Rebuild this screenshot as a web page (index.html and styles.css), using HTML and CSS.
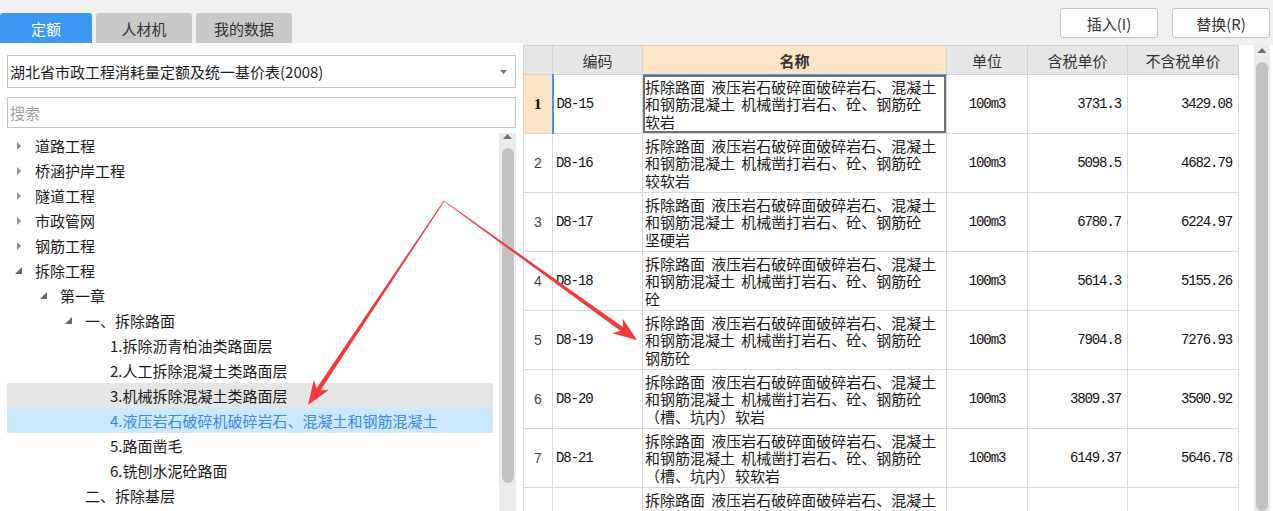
FILE: index.html
```html
<!DOCTYPE html>
<html lang="zh-CN">
<head>
<meta charset="utf-8">
<title>定额</title>
<link rel="stylesheet" href="styles.css">
</head>
<body>
<div class="app">
  <header class="topbar">
    <nav class="tabs">
      <div class="tab active">定额</div>
      <div class="tab">人材机</div>
      <div class="tab">我的数据</div>
    </nav>
    <div class="actions">
      <button class="btn">插入(I)</button>
      <button class="btn">替换(R)</button>
    </div>
  </header>
  <main class="main">
    <aside class="left">
      <div class="select">
        <span>湖北省市政工程消耗量定额及统一基价表(2008)</span>
        <svg class="caret" width="7" height="4" viewBox="0 0 7 4"><polygon points="0,0 7,0 3.5,4" fill="#777"/></svg>
      </div>
      <div class="search">搜索</div>
      <div class="tree-wrap">
        <ul class="tree">
          <li class="l0"><span class="tog"><svg width="22" height="25" viewBox="0 0 22 25"><polygon points="4,9 4,17 8,13" fill="#8c8c8c"/></svg></span>道路工程</li>
          <li class="l0"><span class="tog"><svg width="22" height="25" viewBox="0 0 22 25"><polygon points="4,9 4,17 8,13" fill="#8c8c8c"/></svg></span>桥涵护岸工程</li>
          <li class="l0"><span class="tog"><svg width="22" height="25" viewBox="0 0 22 25"><polygon points="4,9 4,17 8,13" fill="#8c8c8c"/></svg></span>隧道工程</li>
          <li class="l0"><span class="tog"><svg width="22" height="25" viewBox="0 0 22 25"><polygon points="4,9 4,17 8,13" fill="#8c8c8c"/></svg></span>市政管网</li>
          <li class="l0"><span class="tog"><svg width="22" height="25" viewBox="0 0 22 25"><polygon points="4,9 4,17 8,13" fill="#8c8c8c"/></svg></span>钢筋工程</li>
          <li class="l0"><span class="tog"><svg width="22" height="25" viewBox="0 0 22 25"><polygon points="9,9 9,16 2,16" fill="#666"/></svg></span>拆除工程</li>
          <li class="l1"><span class="tog"><svg width="22" height="25" viewBox="0 0 22 25"><polygon points="9,9 9,16 2,16" fill="#666"/></svg></span>第一章</li>
          <li class="l2"><span class="tog"><svg width="22" height="25" viewBox="0 0 22 25"><polygon points="9,9 9,16 2,16" fill="#666"/></svg></span>一、拆除路面</li>
          <li class="l3"><span class="tog"></span>1.拆除沥青柏油类路面层</li>
          <li class="l3"><span class="tog"></span>2.人工拆除混凝土类路面层</li>
          <li class="l3 hover"><span class="tog"></span>3.机械拆除混凝土类路面层</li>
          <li class="l3 selected"><span class="tog"></span>4.液压岩石破碎机破碎岩石、混凝土和钢筋混凝土</li>
          <li class="l3"><span class="tog"></span>5.路面凿毛</li>
          <li class="l3"><span class="tog"></span>6.铣刨水泥砼路面</li>
          <li class="l2"><span class="tog"></span>二、拆除基层</li>
        </ul>
        <div class="vscroll tree-scroll">
          <svg class="up" width="17" height="8" viewBox="0 0 17 8"><polygon points="4,6 13,6 8.5,1" fill="#707070"/></svg>
          <div class="thumb"></div>
        </div>
      </div>
    </aside>
    <section class="right">
      <div class="grid-area">
        <table class="grid">
          <colgroup>
            <col class="c-rn"><col class="c-code"><col class="c-name"><col class="c-unit"><col class="c-p1"><col class="c-p2">
          </colgroup>
          <thead>
            <tr>
              <th></th>
              <th>编码</th>
              <th class="name-h">名称</th>
              <th>单位</th>
              <th>含税单价</th>
              <th>不含税单价</th>
            </tr>
          </thead>
          <tbody>
            <tr class="current">
              <td class="rn">1</td>
              <td class="code">D8-15</td>
              <td class="name">拆除路面 液压岩石破碎面破碎岩石、混凝土<br>和钢筋混凝土 机械凿打岩石、砼、钢筋砼<br>软岩</td>
              <td class="unit">100m3</td>
              <td class="num">3731.3</td>
              <td class="num">3429.08</td>
            </tr>
            <tr>
              <td class="rn">2</td>
              <td class="code">D8-16</td>
              <td class="name">拆除路面 液压岩石破碎面破碎岩石、混凝土<br>和钢筋混凝土 机械凿打岩石、砼、钢筋砼<br>较软岩</td>
              <td class="unit">100m3</td>
              <td class="num">5098.5</td>
              <td class="num">4682.79</td>
            </tr>
            <tr>
              <td class="rn">3</td>
              <td class="code">D8-17</td>
              <td class="name">拆除路面 液压岩石破碎面破碎岩石、混凝土<br>和钢筋混凝土 机械凿打岩石、砼、钢筋砼<br>坚硬岩</td>
              <td class="unit">100m3</td>
              <td class="num">6780.7</td>
              <td class="num">6224.97</td>
            </tr>
            <tr>
              <td class="rn">4</td>
              <td class="code">D8-18</td>
              <td class="name">拆除路面 液压岩石破碎面破碎岩石、混凝土<br>和钢筋混凝土 机械凿打岩石、砼、钢筋砼<br>砼</td>
              <td class="unit">100m3</td>
              <td class="num">5614.3</td>
              <td class="num">5155.26</td>
            </tr>
            <tr>
              <td class="rn">5</td>
              <td class="code">D8-19</td>
              <td class="name">拆除路面 液压岩石破碎面破碎岩石、混凝土<br>和钢筋混凝土 机械凿打岩石、砼、钢筋砼<br>钢筋砼</td>
              <td class="unit">100m3</td>
              <td class="num">7904.8</td>
              <td class="num">7276.93</td>
            </tr>
            <tr>
              <td class="rn">6</td>
              <td class="code">D8-20</td>
              <td class="name">拆除路面 液压岩石破碎面破碎岩石、混凝土<br>和钢筋混凝土 机械凿打岩石、砼、钢筋砼<br>（槽、坑内）软岩</td>
              <td class="unit">100m3</td>
              <td class="num">3809.37</td>
              <td class="num">3500.92</td>
            </tr>
            <tr>
              <td class="rn">7</td>
              <td class="code">D8-21</td>
              <td class="name">拆除路面 液压岩石破碎面破碎岩石、混凝土<br>和钢筋混凝土 机械凿打岩石、砼、钢筋砼<br>（槽、坑内）较软岩</td>
              <td class="unit">100m3</td>
              <td class="num">6149.37</td>
              <td class="num">5646.78</td>
            </tr>
            <tr>
              <td class="rn">8</td>
              <td class="code">D8-22</td>
              <td class="name">拆除路面 液压岩石破碎面破碎岩石、混凝土<br>和钢筋混凝土 机械凿打岩石、砼、钢筋砼<br>（槽、坑内）坚硬岩</td>
              <td class="unit">100m3</td>
              <td class="num">8161.37</td>
              <td class="num">7491.17</td>
            </tr>
          </tbody>
        </table>
      </div>
      <div class="vscroll grid-scroll">
        <svg class="up" width="16" height="10" viewBox="0 0 16 10"><polygon points="3.5,8 12.5,8 8,3" fill="#707070"/></svg>
        <div class="thumb"></div>
      </div>
    </section>
  </main>
  <svg class="annot" width="1273" height="511" viewBox="0 0 1273 511">
    <polygon fill="#f23a3a" points="308,405 328.8,390.02 320.37,390.41 444.4,201.25 443.6,200.75 316.71,387.97 313.82,380.04"/>
    <polygon fill="#f23a3a" points="637,340 612.26,333.27 620.29,330.68 443.75,201.35 444.25,200.65 622.87,327.1 622.78,318.67"/>
  </svg>
</div>
</body>
</html>
```

FILE: styles.css
```css
* { box-sizing: border-box; }

html, body {
  margin: 0;
  padding: 0;
}

body {
  width: 1273px;
  height: 511px;
  overflow: hidden;
  background: #f0f0f0;
  font-family: "Noto Sans CJK SC", "Noto Sans", sans-serif;
  color: #1e1e1e;
}

.app {
  position: relative;
  width: 1273px;
  height: 511px;
  display: flex;
  flex-direction: column;
}

/* ---------- top bar ---------- */
.topbar {
  flex: none;
  height: 43px;
  display: flex;
  justify-content: space-between;
}

.tabs {
  display: flex;
  align-items: flex-end;
  gap: 4px;
}

.tab {
  width: 96px;
  height: 30px;
  display: flex;
  align-items: center;
  justify-content: center;
  font-size: 15px;
  color: #333;
  background: #c8c8c8;
  border-radius: 3px 3px 0 0;
}

.tab.active {
  width: 92px;
  background: #3d97f3;
  color: #fff;
}

.actions {
  display: flex;
  align-items: flex-start;
  gap: 14px;
  padding: 8px 3px 0 0;
}

.btn {
  width: 98px;
  height: 30px;
  background: #fff;
  border: 1px solid #c4c4c4;
  border-radius: 3px;
  font-family: "Noto Sans CJK SC", "Noto Sans", sans-serif;
  font-size: 15px;
  color: #333;
  padding: 0;
}

/* ---------- main ---------- */
.main {
  flex: 1;
  min-height: 0;
  display: flex;
}

.left {
  width: 523px;
  flex: none;
  background: #fff;
  padding: 12px 7px 0;
  display: flex;
  flex-direction: column;
  min-height: 0;
}

.select {
  height: 33px;
  flex: none;
  border: 1px solid #c3c3c3;
  display: flex;
  align-items: center;
  justify-content: space-between;
  padding: 0 8px 0 2px;
  font-size: 15px;
  color: #1e1e1e;
}

.search {
  flex: none;
  margin-top: 9px;
  height: 31px;
  border: 1px solid #c3c3c3;
  padding-left: 2px;
  display: flex;
  align-items: center;
  font-size: 15px;
  color: #a0a0a0;
}

.tree-wrap {
  flex: 1;
  min-height: 0;
  margin-top: 5px;
  display: flex;
  gap: 6px;
  overflow: hidden;
}

.tree {
  flex: 1;
  list-style: none;
  margin: 0;
  padding: 0;
}

.tree li {
  height: 25px;
  display: flex;
  align-items: center;
  font-size: 15px;
  white-space: nowrap;
  color: #1a1a1a;
}

.tree .l0 { padding-left: 6px; }
.tree .l1 { padding-left: 31px; }
.tree .l2 { padding-left: 56px; }
.tree .l3 { padding-left: 81px; }

.tree li.hover { background: #e5e5e5; }
.tree li.selected { background: #cce8ff; color: #3a8ae6; }

.tog {
  width: 22px;
  height: 25px;
  flex: none;
  display: block;
}

.tog svg { display: block; }

/* ---------- scrollbars ---------- */
.vscroll {
  flex: none;
  background: #ebebeb;
  display: flex;
  flex-direction: column;
  align-items: center;
}

.vscroll .up { display: block; flex: none; }

.tree-scroll {
  width: 17px;
}

.tree-scroll .thumb {
  margin-top: 7px;
  width: 12px;
  height: 335px;
  border-radius: 6px;
  background: #c2c2c2;
}

.grid-scroll {
  width: 16px;
  margin-right: 3px;
}

.grid-scroll .thumb {
  margin-top: 7px;
  width: 12px;
  height: 480px;
  border-radius: 6px;
  background: #c2c2c2;
}

/* ---------- right grid ---------- */
.right {
  flex: 1;
  min-width: 0;
  margin-top: 2px;
  background: #fff;
  display: flex;
}

.grid-area {
  flex: 1;
  min-width: 0;
  overflow: hidden;
}

.grid {
  border-collapse: collapse;
  table-layout: fixed;
  width: 715px;
}

.c-rn { width: 29px; }
.c-code { width: 90px; }
.c-name { width: 304px; }
.c-unit { width: 81px; }
.c-p1 { width: 100px; }
.c-p2 { width: 111px; }

.grid th {
  height: 29px;
  padding: 0;
  background: #e6e6e6;
  border: 1px solid #d2d2d2;
  font-weight: normal;
  font-size: 15px;
  color: #333;
}

.grid th.name-h {
  background: #fde5c5;
  font-weight: bold;
  border-bottom: 1px solid #5aa0f0;
}

.grid tbody tr { height: 59px; }

.grid td {
  padding: 0;
  border: 1px solid #d9d9d9;
  vertical-align: middle;
  white-space: nowrap;
  overflow: hidden;
  color: #1a1a1a;
}

.grid .rn {
  text-align: center;
  font-family: "Liberation Sans", sans-serif;
  font-size: 14px;
  color: #444;
}

.grid .code,
.grid .unit,
.grid .num {
  font-family: "Liberation Mono", monospace;
  font-size: 14px;
  letter-spacing: -1.1px;
  color: #111;
}

.grid .code { padding-left: 3px; }
.grid .unit { text-align: center; }
.grid .num { text-align: right; padding-right: 6px; }

.grid .name {
  padding: 0 2px;
  font-size: 15px;
  line-height: 17.5px;
  word-spacing: 3px;
}

.grid tr.current .rn {
  background: #fce3c3;
  font-family: "Liberation Serif", serif;
  font-weight: bold;
  font-size: 15px;
  color: #000;
}

.grid tr.current .code {
  border-left: 2px solid #3d95f4;
}

.grid tr.current .name {
  box-shadow: inset 0 0 0 2px #707070;
}

/* ---------- annotation overlay ---------- */
.annot {
  position: absolute;
  left: 0;
  top: 0;
  pointer-events: none;
}
```
